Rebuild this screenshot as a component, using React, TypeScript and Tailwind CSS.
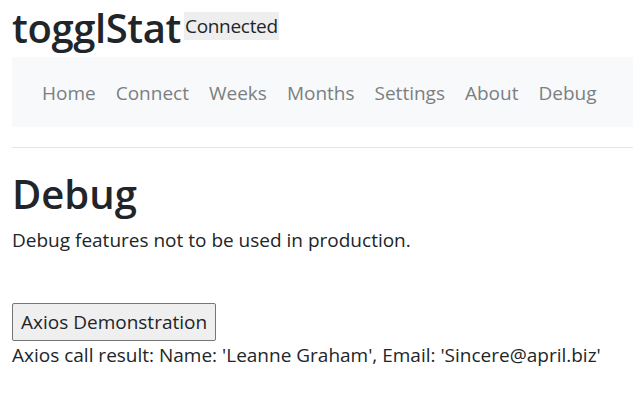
const links = ["Home", "Connect", "Weeks", "Months", "Settings", "About", "Debug"];

export default function App() {
  return (
    <div className="min-h-[401px] bg-white pl-3 text-[#212529] font-['Open_Sans',sans-serif]">
      <div className="flex items-start pt-1">
        <h1 className="text-[40px] font-semibold leading-[48px] tracking-[-0.4px]">togglStat</h1>
        <span className="mt-2 ml-[3px] bg-[#eeeeee] px-px text-[19px] leading-[28px] tracking-[-0.3px]">Connected</span>
      </div>
      <nav className="mt-[5px] flex h-[70px] items-center bg-[#f8f9fa] pl-[30px] pt-[3px]">
        {links.map((l) => (
          <a key={l} className="mr-5 text-[19px] text-[#7b7f83]">
            {l}
          </a>
        ))}
      </nav>
      <hr className="mt-5 border-[#e5e5e5]" />
      <h1 className="mt-[22px] text-[40px] font-semibold leading-[48px]">Debug</h1>
      <p className="mt-[8px] text-[19px] leading-[28px]">Debug features not to be used in production.</p>
      <button className="mt-[49px] rounded-[2px] border border-[#767676] bg-[#efefef] px-[8px] py-[5px] text-[19px] leading-[26px]">
        Axios Demonstration
      </button>
      <p className="mt-0 text-[19px] leading-[28px]">Axios call result: Name: 'Leanne Graham', Email: 'Sincere@april.biz'</p>
    </div>
  );
}
